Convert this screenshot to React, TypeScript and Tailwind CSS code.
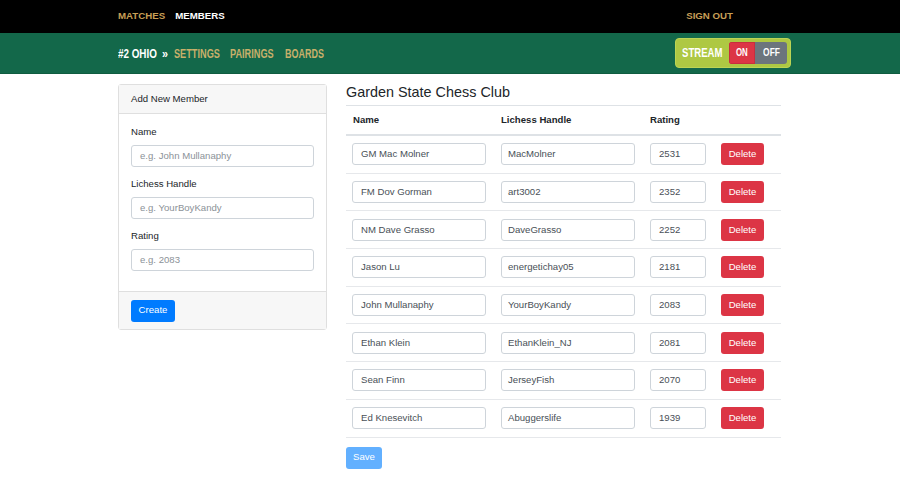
import React from "react";

const members = [
  ["GM Mac Molner", "MacMolner", "2531"],
  ["FM Dov Gorman", "art3002", "2352"],
  ["NM Dave Grasso", "DaveGrasso", "2252"],
  ["Jason Lu", "energetichay05", "2181"],
  ["John Mullanaphy", "YourBoyKandy", "2083"],
  ["Ethan Klein", "EthanKlein_NJ", "2081"],
  ["Sean Finn", "JerseyFish", "2070"],
  ["Ed Knesevitch", "Abuggerslife", "1939"],
];

export default function App() {
  return (
    <div className="min-h-[477px] bg-white text-[#212529]" style={{ fontFamily: '"Liberation Sans", Arial, sans-serif' }}>
      <div className="h-[33px] bg-black pl-[118px]">
        <div className="w-[673px] flex items-center h-full text-[9.7px] font-bold">
          <span className="text-[#c79f56]">MATCHES</span>
          <span className="text-white ml-[10px]">MEMBERS</span>
          <span className="text-[#c79f56] ml-auto mr-[58px]">SIGN OUT</span>
        </div>
      </div>
      <div className="h-[41px] bg-[#13684a] border-b border-[#0f5c40] pl-[118px]">
        <div className="w-[673px] flex items-center h-full font-bold text-[13.5px] whitespace-nowrap">
          <div className="flex items-center pt-[3px]">
            <span className="w-[44px]"><span className="inline-block origin-left scale-x-[0.73] text-white">#2 OHIO</span></span>
            <span className="w-[12px]"><span className="inline-block origin-left scale-x-[0.8] text-white">»</span></span>
            <span className="w-[56px]"><span className="inline-block origin-left scale-x-[0.68] text-[#c8b06a]">SETTINGS</span></span>
            <span className="w-[55px]"><span className="inline-block origin-left scale-x-[0.68] text-[#c8b06a]">PAIRINGS</span></span>
            <span className="w-[40px]"><span className="inline-block origin-left scale-x-[0.665] text-[#c8b06a]">BOARDS</span></span>
          </div>
          <div className="ml-auto w-[116px] flex items-center h-[30px] rounded-[4px] bg-[#aec843] border border-[#bcd455]">
            <span className="w-[53px] pl-[6px] pt-[1px]"><span className="inline-block origin-left scale-x-[0.71] text-white">STREAM</span></span>
            <div className="flex h-[22px] rounded-[3px] overflow-hidden text-[10.5px] font-bold text-white">
              <span className="w-[26px] flex items-center justify-center bg-[#dc3545] border border-[#c82e3e]"><span className="inline-block scale-x-[0.75]">ON</span></span>
              <span className="w-[32px] flex items-center justify-center bg-[#6c757d]"><span className="inline-block scale-x-[0.8]">OFF</span></span>
            </div>
          </div>
        </div>
      </div>

      <div className="pl-[118px]">
        <div className="w-[673px] flex gap-[19px] pt-[10px] text-[9.6px]">
          <div className="w-[209px] h-[246px] shrink-0 border border-[#dfdfdf] rounded-[3px] flex flex-col">
            <div className="h-[29px] bg-[#f7f7f7] border-b border-[#dfdfdf] px-[12px] flex items-center">Add New Member</div>
            <div className="px-[12px] pt-[12px] flex-1">
              <div className="leading-[12px] mb-[7px]">Name</div>
              <div className="h-[22px] border border-[#ced4da] rounded-[3px] flex items-center px-[8px] text-[#8b9298] mb-[11px]">e.g. John Mullanaphy</div>
              <div className="leading-[12px] mb-[7px]">Lichess Handle</div>
              <div className="h-[22px] border border-[#ced4da] rounded-[3px] flex items-center px-[8px] text-[#8b9298] mb-[11px]">e.g. YourBoyKandy</div>
              <div className="leading-[12px] mb-[7px]">Rating</div>
              <div className="h-[22px] border border-[#ced4da] rounded-[3px] flex items-center px-[8px] text-[#8b9298]">e.g. 2083</div>
            </div>
            <div className="h-[38px] bg-[#f7f7f7] border-t border-[#dfdfdf] px-[12px] flex items-center">
              <button className="h-[22px] w-[44px] bg-[#007bff] text-white rounded-[3px] flex items-center justify-center">Create</button>
            </div>
          </div>

          <div className="flex-1 pr-[10px]">
            <div className="text-[14.4px] leading-[17px] mb-[4px]">Garden State Chess Club</div>
            <div className="border-t border-[#dee2e6]">
              <div className="h-[30px] flex items-center font-bold border-b-2 border-[#dee2e6]">
                <div className="w-[155px] pl-[7px]">Name</div>
                <div className="w-[149px]">Lichess Handle</div>
                <div>Rating</div>
              </div>
              {members.map(([n, h, r]) => (
                <div key={n} className="h-[37.7px] flex items-center border-b border-[#e6e8eb]">
                  <div className="w-[134px] ml-[6px] h-[22px] border border-[#ced4da] rounded-[3px] flex items-center px-[8px] text-[#495057]">{n}</div>
                  <div className="w-[134px] ml-[15px] h-[22px] border border-[#ced4da] rounded-[3px] flex items-center px-[6px] text-[#495057]">{h}</div>
                  <div className="w-[56px] ml-[15px] h-[22px] border border-[#ced4da] rounded-[3px] flex items-center px-[8px] text-[#495057]">{r}</div>
                  <button className="ml-[15px] w-[43px] h-[22px] bg-[#dc3545] text-white rounded-[3px] flex items-center justify-center">Delete</button>
                </div>
              ))}
            </div>
            <button className="mt-[9px] h-[22px] w-[36px] bg-[#62b0ff] text-white rounded-[3px] flex items-center justify-center">Save</button>
          </div>
        </div>
      </div>
    </div>
  );
}
